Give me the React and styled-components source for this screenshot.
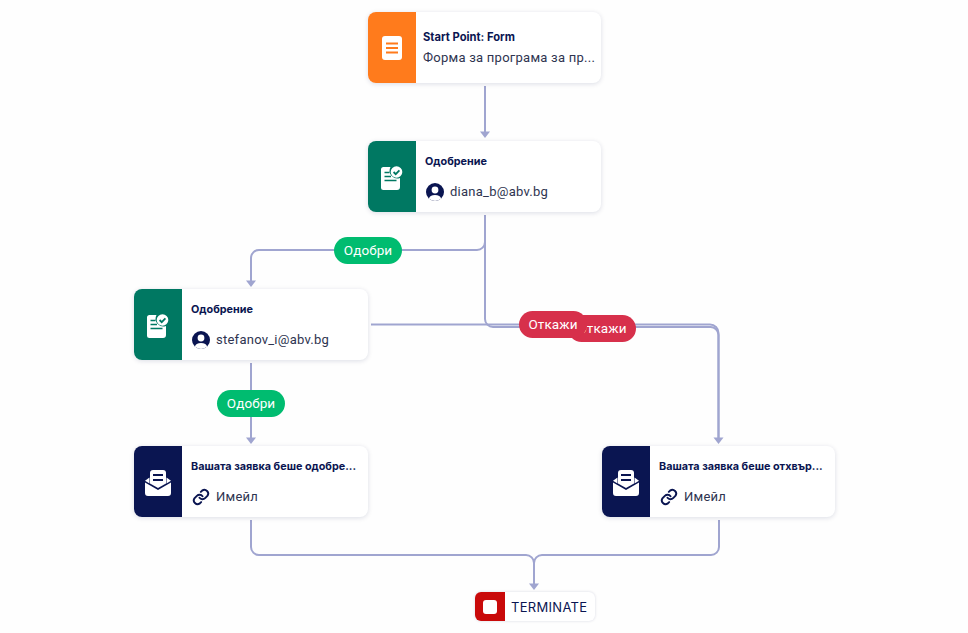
import React from 'react';
import styled, { createGlobalStyle } from 'styled-components';

const Global = createGlobalStyle`
  html, body { margin: 0; padding: 0; background: #fefefe; }
  body { font-family: "Inter", "Noto Sans", sans-serif; }
`;

const Canvas = styled.div`
  position: relative;
  width: 968px;
  height: 633px;
  overflow: hidden;
  background: #fefefe;
`;

const Edges = styled.svg`
  position: absolute;
  left: 0;
  top: 0;
`;

const Node = styled.div`
  position: absolute;
  left: ${p => p.$x}px;
  top: ${p => p.$y}px;
  width: ${p => p.$w || 233}px;
  height: 71px;
  display: flex;
  background: #fff;
  border-radius: 8px;
  box-shadow: 0 1px 5px rgba(10, 21, 81, 0.14);
  overflow: hidden;
`;

const IconBox = styled.div`
  flex: 0 0 48px;
  display: flex;
  align-items: center;
  justify-content: center;
  box-sizing: border-box;
  padding-top: ${p => p.$drop || 0}px;
  background: ${p => p.$bg};
`;

const Body = styled.div`
  flex: 1;
  min-width: 0;
  display: flex;
  flex-direction: column;
  padding: ${p => p.$top}px 4px 0 ${p => p.$left}px;
`;

const Title = styled.div`
  font: 700 ${p => p.$size || 10.8}px/14px "Inter", sans-serif;
  color: #0a1551;
  white-space: nowrap;
`;

const Value = styled.div`
  display: flex;
  align-items: center;
  gap: 6px;
  margin-top: ${p => p.$gap}px;
  padding-left: ${p => p.$inset || 0}px;
  font: 400 13px/18px "Roboto", sans-serif;
  letter-spacing: 0.25px;
  color: #2e3450;
  white-space: nowrap;
`;

const Pill = styled.div`
  position: absolute;
  left: ${p => p.$x}px;
  top: ${p => p.$y}px;
  width: 68px;
  height: 27px;
  border-radius: 14px;
  display: flex;
  align-items: center;
  justify-content: center;
  font: 400 13.5px/1 "Roboto", sans-serif;
  letter-spacing: 0.1px;
  color: #fff;
  background: ${p => p.$bg};
  z-index: ${p => p.$z || 1};
`;

const Terminate = styled.div`
  position: absolute;
  left: 475px;
  top: 592px;
  width: 120px;
  height: 29px;
  display: flex;
  align-items: center;
  background: #fff;
  border-radius: 6px;
  box-shadow: 0 0 3px rgba(10, 21, 81, 0.16);
  overflow: hidden;
  font: 400 13px/1 "Inter", sans-serif;
  letter-spacing: 0.3px;
  color: #0a1551;
`;

const TerminateLabel = styled.span`
  padding-top: 2px;
`;

const StopBox = styled.div`
  flex: 0 0 30px;
  height: 100%;
  display: flex;
  align-items: center;
  justify-content: center;
  background: #c90a0a;
  margin-right: 6px;
`;

const StopSquare = styled.div`
  width: 14px;
  height: 14px;
  border-radius: 3px;
  background: #fff;
`;

const FormIcon = () => (
  <svg width="20" height="24" viewBox="0 0 20 24">
    <rect width="20" height="24" rx="3" fill="#fff" />
    <path d="M4 7.5h12M4 12h12M4 16.5h12" stroke="#ff7b1c" strokeWidth="2.2" />
  </svg>
);

const ApproveIcon = () => (
  <svg width="22" height="24" viewBox="0 0 22 24">
    <path d="M2.5 1H9.5a7.8 7.8 0 0 0 9.5 11V21a3 3 0 0 1-3 3H2.5a2.5 2.5 0 0 1-2.5-2.5v-18A2.5 2.5 0 0 1 2.5 1Z" fill="#fff" />
    <circle cx="15.5" cy="6" r="5.8" fill="#fff" />
    <path d="M12.6 6l2.1 2.1 3.7-3.8" fill="none" stroke="#007862" strokeWidth="1.8" />
    <path d="M3.5 6.5h5M3.5 10.5h6.5M3.5 14.5h12" stroke="#007862" strokeWidth="1.5" />
  </svg>
);

const MailIcon = () => (
  <svg width="26" height="26" viewBox="0 0 26 26">
    <path d="M0 12.5 13 20l13-7.5V23a3 3 0 0 1-3 3H3a3 3 0 0 1-3-3Z" fill="#fff" />
    <path d="M0 10.8 4.5 7.6v5.8ZM26 10.8l-4.5-3.2v5.8Z" fill="#fff" />
    <path d="M8 0h10a3 3 0 0 1 3 3v10.5l-8 4.5-8-4.5V3a3 3 0 0 1 3-3Z" fill="#fff" />
    <path d="M8 5h10M8 10h10" stroke="#0a1551" strokeWidth="2" />
  </svg>
);

const LinkIcon = () => (
  <svg width="18" height="18" viewBox="0 0 24 24" fill="none" stroke="#0a1551" strokeWidth="2.6" strokeLinecap="round" strokeLinejoin="round">
    <path d="M10 13a5 5 0 0 0 7.5.5l3-3a5 5 0 0 0-7-7l-1.7 1.7" />
    <path d="M14 11a5 5 0 0 0-7.5-.5l-3 3a5 5 0 0 0 7 7l1.7-1.7" />
  </svg>
);

const Avatar = () => (
  <svg width="18" height="18" viewBox="0 0 18 18">
    <defs>
      <clipPath id="av"><circle cx="9" cy="9" r="9" /></clipPath>
    </defs>
    <circle cx="9" cy="9" r="9" fill="#0a1551" />
    <g clipPath="url(#av)" fill="#fff">
      <circle cx="9" cy="7" r="3.4" />
      <ellipse cx="9" cy="15.5" rx="6" ry="3.6" />
    </g>
  </svg>
);

const line = '#a0a5d0';

const edgePaths = [
  'M485 86V133',
  'M485 215V242a8 8 0 0 1-8 8H259a8 8 0 0 0-8 8V282',
  'M485 215V319a8 8 0 0 0 8 8H710a8 8 0 0 1 8.5 8V439',
  'M371 324.5H710a8.5 8.5 0 0 1 8.5 8.5V439',
  'M251 363V439',
  'M251 520V547a8 8 0 0 0 8 8H526a8 8 0 0 1 8 8V585',
  'M719 520V547a8 8 0 0 1-8 8H542a8 8 0 0 0-8 8V585',
];

const arrows = [[485, 138], [251, 287], [718.5, 444], [251, 444], [534, 590]];

const Person = ({ x, y, w, email }) => (
  <Node $x={x} $y={y} $w={w}>
    <IconBox $bg="#007862" $drop={2}><ApproveIcon /></IconBox>
    <Body $top={14} $left={9}>
      <Title>Одобрение</Title>
      <Value $gap={14} $inset={1}><Avatar />{email}</Value>
    </Body>
  </Node>
);

const Email = ({ x, w, title }) => (
  <Node $x={x} $y={446} $w={w}>
    <IconBox $bg="#0a1551" $drop={3}><MailIcon /></IconBox>
    <Body $top={14} $left={9}>
      <Title>{title}</Title>
      <Value $gap={14} $inset={1}><LinkIcon />Имейл</Value>
    </Body>
  </Node>
);

export default function App() {
  return (
    <Canvas>
      <Global />
      <Edges width="968" height="633" fill="none">
        {edgePaths.map(d => <path key={d} d={d} stroke={line} strokeWidth="2" />)}
        {arrows.map(([x, y]) => (
          <path key={`${x}-${y}`} d={`M${x - 5} ${y - 6.5}h10l-5 6.5Z`} fill={line} />
        ))}
      </Edges>

      <Node $x={368} $y={12}>
        <IconBox $bg="#ff7b1c"><FormIcon /></IconBox>
        <Body $top={18} $left={7}>
          <Title $size={11.2}>Start Point: Form</Title>
          <Value $gap={5}>Форма за програма за пр...</Value>
        </Body>
      </Node>

      <Person x={368} y={141} email="diana_b@abv.bg" />
      <Person x={134} y={289} w={234} email="stefanov_i@abv.bg" />
      <Email x={134} w={234} title="Вашата заявка беше одобре..." />
      <Email x={602} title="Вашата заявка беше отхвър..." />

      <Pill $x={334} $y={237} $bg="#00bc70">Одобри</Pill>
      <Pill $x={217} $y={390} $bg="#00bc70">Одобри</Pill>
      <Pill $x={568} $y={315} $bg="#d7304b">Откажи</Pill>
      <Pill $x={519} $y={311} $bg="#d7304b" $z={2}>Откажи</Pill>

      <Terminate>
        <StopBox><StopSquare /></StopBox>
        <TerminateLabel>TERMINATE</TerminateLabel>
      </Terminate>
    </Canvas>
  );
}
